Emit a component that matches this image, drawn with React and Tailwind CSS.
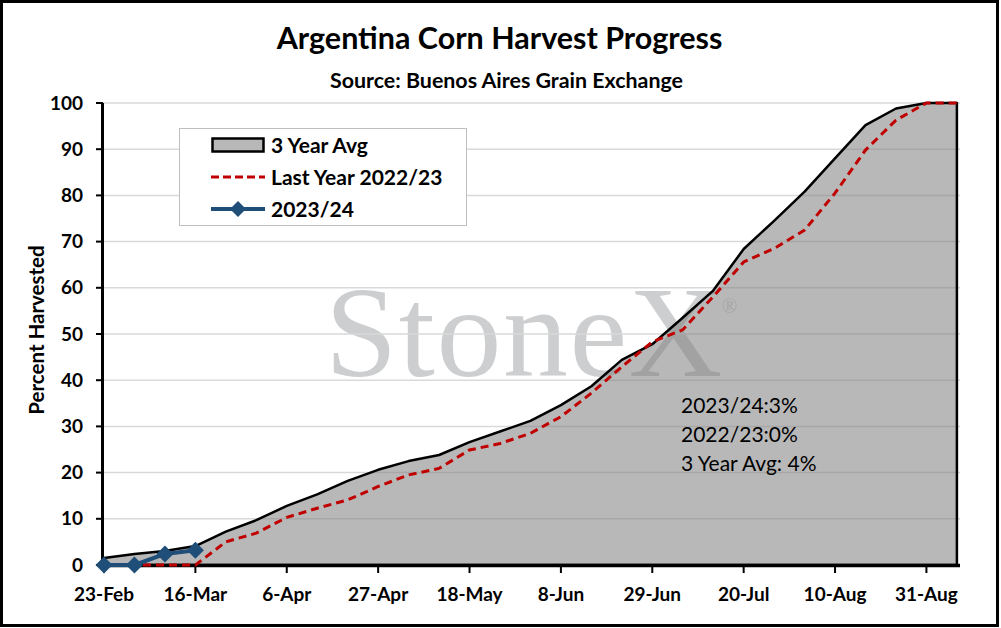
import React from "react";

const ticks = ["23-Feb", "16-Mar", "6-Apr", "27-Apr", "18-May", "8-Jun", "29-Jun", "20-Jul", "10-Aug", "31-Aug"];

const avg = [1.5, 2.4, 3.0, 4.1, 7.2, 9.7, 12.8, 15.3, 18.2, 20.6, 22.5, 23.8, 26.6, 28.9, 31.2, 34.6, 38.7, 44.4, 47.8, 53.5, 59.4, 68.4, 74.5, 80.8, 88.0, 95.2, 98.8, 100, 100];
const lastYear = [0, 0, 0, 0, 5.0, 6.9, 10.3, 12.3, 14.1, 17.0, 19.5, 20.9, 24.9, 26.3, 28.5, 32.1, 37.2, 42.9, 48.3, 50.9, 58.1, 65.6, 68.5, 72.5, 80.5, 89.8, 96.3, 100, 100];
const current = [0, 0, 2.4, 3.2];

const px = (i) => 104 + 30.46 * i;
const py = (v) => 565 - 4.62 * v;

const toPath = (data) =>
  data.map((v, i) => `${i ? "L" : "M"}${px(i).toFixed(1)},${py(v).toFixed(1)}`).join(" ");

const areaPath = `${toPath(avg)} L${px(28).toFixed(1)},565 L104,565 Z`;

const Diamond = ({ cx, cy, r = 8.5 }) => (
  <path d={`M${cx},${cy - r} L${cx + r},${cy} L${cx},${cy + r} L${cx - r},${cy} Z`} fill="#1f4e79" />
);

const Chart = () => {
  const grid = [10, 20, 30, 40, 50, 60, 70, 80, 90, 100];
  const yLabels = [0, 10, 20, 30, 40, 50, 60, 70, 80, 90, 100];

  return (
    <svg width="993" height="533" viewBox="3 91 993 533" className="block">
      {/* watermark */}
      <text x="325" y="376" fontFamily="Liberation Serif, serif" fontSize="130" letterSpacing="1.5" fill="#a2a5aa" fillOpacity="0.55">
        StoneX
      </text>
      <text x="722" y="313" fontFamily="Liberation Serif, serif" fontSize="20" fill="#a2a5aa" fillOpacity="0.5">
        ®
      </text>

      {grid.map((g) => (
        <line key={g} x1="103" x2="960" y1={py(g)} y2={py(g)} stroke="#d9d9d9" strokeWidth="1.5" />
      ))}

      <path d={areaPath} fill="#808080" fillOpacity="0.56" stroke="#000" strokeWidth="2.5" strokeLinejoin="round" />

      {/* axes */}
      <line x1="102.5" x2="102.5" y1="103" y2="566" stroke="#000" strokeWidth="3" />
      {yLabels.map((v) => (
        <line key={v} x1="96" x2="103" y1={py(v)} y2={py(v)} stroke="#000" strokeWidth="2" />
      ))}
      <line x1="101" x2="960" y1="565.5" y2="565.5" stroke="#000" strokeWidth="3.5" />
      {ticks.map((t, k) => (
        <line key={t} x1={px(k * 3)} x2={px(k * 3)} y1="565" y2="573" stroke="#000" strokeWidth="2" />
      ))}

      <path d={toPath(lastYear)} fill="none" stroke="#c00000" strokeWidth="3" strokeDasharray="8 5" />
      <path d={toPath(current)} fill="none" stroke="#1f4e79" strokeWidth="4" strokeLinejoin="round" />
      {current.map((v, i) => (
        <Diamond key={i} cx={px(i)} cy={py(v)} />
      ))}

      <g fontFamily="Lato, sans-serif" fontWeight="700" fontSize="19" fill="#000">
        {yLabels.map((v) => (
          <text key={v} x="83" y={py(v) + 6.5} textAnchor="end">
            {v}
          </text>
        ))}
        {ticks.map((t, k) => (
          <text key={t} x={px(k * 3)} y="601" textAnchor="middle">
            {t}
          </text>
        ))}
        <text x="43.5" y="330" fontSize="20.5" textAnchor="middle" transform="rotate(-90 43.5 330)">
          Percent Harvested
        </text>
      </g>
    </svg>
  );
};

const Legend = () => (
  <div className="absolute left-[176px] top-[37px] w-[288px] h-[98px] border-[1.5px] border-[#bfbfbf] bg-white pl-[31px] flex flex-col">
    <div className="h-[32px] flex items-center gap-[6px]">
      <svg width="54" height="16" viewBox="0 0 54 16">
        <rect x="1.5" y="1.5" width="51" height="13" fill="#b8b8b8" stroke="#000" strokeWidth="2.5" />
      </svg>
      <span>3 Year Avg</span>
    </div>
    <div className="h-[32px] flex items-center gap-[6px]">
      <svg width="54" height="16" viewBox="0 0 54 16">
        <line x1="0" x2="54" y1="8" y2="8" stroke="#c00000" strokeWidth="3" strokeDasharray="8 4" />
      </svg>
      <span>Last Year 2022/23</span>
    </div>
    <div className="h-[32px] flex items-center gap-[6px]">
      <svg width="54" height="18" viewBox="0 0 54 18">
        <line x1="0" x2="54" y1="9" y2="9" stroke="#1f4e79" strokeWidth="4" />
        <path d="M27,1 L35,9 L27,17 L19,9 Z" fill="#1f4e79" />
      </svg>
      <span>2023/24</span>
    </div>
  </div>
);

export default function App() {
  return (
    <div className="w-[999px] h-[627px] border-[3px] border-black bg-white font-[Lato,sans-serif] text-black overflow-hidden">
      <div className="h-[88px] flex flex-col items-center">
        <h1 className="pt-[18px] text-[30.5px] leading-[32px] font-bold">Argentina Corn Harvest Progress</h1>
        <p className="mt-[16px] pl-[14px] text-[21.4px] leading-[22px] font-bold">Source: Buenos Aires Grain Exchange</p>
      </div>
      <div className="relative h-[533px]">
        <Chart />
        <div className="absolute inset-0 text-[21px] leading-[26px] font-bold">
          <Legend />
        </div>
        <div className="absolute left-[678px] top-[299px] flex flex-col text-[21px] leading-[29px]">
          <span>2023/24:3%</span>
          <span>2022/23:0%</span>
          <span>3 Year Avg: 4%</span>
        </div>
      </div>
    </div>
  );
}
